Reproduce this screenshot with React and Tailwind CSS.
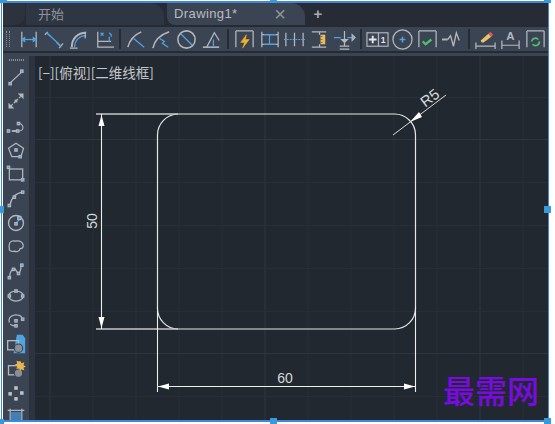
import React from 'react';

const G = '#b4b8be';
const B = '#4ea3e0';

// small square grip point used on most draw icons
const Dot = ({ x, y, s = 3, c = B }) => <rect x={x - s / 2} y={y - s / 2} width={s} height={s} fill={c} />;

const Icon = ({ children, size = 24 }) => (
    <svg width={size} height={size} viewBox="0 0 24 24" fill="none" stroke={G} strokeWidth="1.3" className="block">
        {children}
    </svg>
);

const DimBar = () => (
    <>
        <path d="M3 3h18M3 3v17M21 3v17" stroke={G} />
    </>
);

const topIcons = [
    <><path d="M5 4v16M20 4v16" /><path d="M5 12h15" stroke={B} /><path d="M5 12l3-2v4zM20 12l-3-2v4z" fill={B} stroke={B} /></>,
    <><path d="M3 7l3-3M18 21l4-5" /><path d="M6 6l13 12" stroke={B} /><path d="M5 5l4 4M15 15l4 4" stroke={B} /></>,
    <><path d="M5 20c0-9 6-15 15-15" stroke={G} strokeWidth="2" /><path d="M8 20c0-7 5-12 12-12" stroke={B} /><path d="M3 21h8M19 4v7" /></>,
    <><path d="M6 4v16h17M6 14h14" /><path d="M9 5l3 3M12 5l-3 3M18 14V9" stroke={B} /><path d="M18 5l2 2v2" stroke={B} /></>,
    <><path d="M3 20C5 12 10 7 17 4" strokeWidth="1.6" /><path d="M9 11l11 9" stroke={B} /></>,
    <><path d="M3 21C5 12 11 7 20 4" strokeWidth="1.6" /><path d="M10 11l5 3-2 2 6 4" stroke={B} /></>,
    <><circle cx="12" cy="12" r="9" strokeWidth="1.6" /><path d="M6 6l12 12" stroke={B} /></>,
    <><path d="M3 20h17" strokeWidth="1.6" /><path d="M7 20L15 5l5 8" /><path d="M14 19v-7" stroke={B} /></>,
    <><DimBar /><path d="M14 7l-6 8h4l-2 6 7-9h-4z" fill="#f0b429" stroke="#f0b429" strokeWidth=".5" /></>,
    <><path d="M4 4v16M21 4v16M4 7h17M4 17h17" stroke={G} /><path d="M6 7h13M6 17h13M12 7v10" stroke={B} /></>,
    <><path d="M3 5v14M12 5v14M21 5v14" /><path d="M1 12h22" stroke={B} strokeDasharray="2 1" /></>,
    <><path d="M4 4h15M4 20h15M12 4v3M12 17v3" /><rect x="13" y="7" width="5" height="10" fill="#edb85f" stroke="none" /><path d="M13 9h2M13 12h2M13 15h2" stroke="#555" strokeWidth=".8" /></>,
    <><path d="M12 3v16M7 19h10M7 22h10" /><path d="M1 10h7M15 10h8" stroke={B} /><path d="M12 15l-3-3h6z" fill={G} /><path d="M20 7v6l3-3z" fill={B} /></>,
    <><rect x="1" y="5" width="22" height="14" strokeWidth="1.2" /><path d="M13 5v14" /><path d="M3 12h8M7 8v8" stroke="#e6e6e6" strokeWidth="2" /><text x="15.5" y="16" fontSize="9" fill="#e6e6e6" stroke="none" fontFamily="Liberation Sans, sans-serif" fontWeight="700">1</text></>,
    <><circle cx="12" cy="12" r="10" strokeWidth="1.3" /><path d="M9 12h6M12 9v6" stroke={B} strokeWidth="1.6" /></>,
    <><DimBar /><path d="M7 14l3 3 6-5" stroke="#4fc06e" strokeWidth="2.4" /></>,
    <><path d="M1 12h6" stroke={G} strokeWidth="2" /><path d="M7 12l3-4 3 11 3-14 3 8" strokeWidth="1.4" /></>,
    <><path d="M2 15v7M22 15v7M2 19h20" /><path d="M8 15l-1-2 8-7 3 3-8 6z" fill="#e9c46a" stroke="none" /><path d="M15 6l2-2 3 3-2 2z" fill="#e05a5a" stroke="none" /></>,
    <><path d="M3 13v9M21 13v9M3 18h18" /><text x="12" y="13" textAnchor="middle" fontSize="12" fontWeight="700" fill={G} stroke="none" fontFamily="Liberation Sans, sans-serif">A</text></>,
    <><DimBar /><path d="M8 14a4 4 0 0 1 7-2M16 14a4 4 0 0 1-7 3" stroke="#4fc06e" strokeWidth="1.8" /></>,
];

const sideIcons = [
    <><path d="M5 19L19 6" /><Dot x={19} y={5} /><Dot x={5} y={20} /></>,
    <><path d="M6 18L18 6" strokeDasharray="3 1.500" /><path d="M21 3v7l-7-7zM3 21v-7l7 7z" fill={G} stroke="none" /><Dot x={12} y={12} s={2} /></>,
    <><path d="M14 18h1c5 0 6-3 5-6-1-2-3-3-4-3" /><path d="M7 18h5" stroke="#e6e6e6" strokeWidth="1.600" /><Dot x={3} y={18} /><Dot x={14} y={18} /><Dot x={15} y={9} /></>,
    <><path d="M12 4l9 6-3 10H7L3 10z" strokeWidth="1.5" /><Dot x={12} y={12} /><Dot x={17} y={20} /></>,
    <><rect x="4" y="6" width="16" height="13" strokeWidth="1.5" /><Dot x={3} y={4} /><Dot x={20} y={19} /></>,
    <><path d="M5 20C6 12 12 6 20 5" strokeWidth="1.4" /><Dot x={4} y={21} /><Dot x={10} y={11} /><Dot x={20} y={5} /></>,
    <><circle cx="12" cy="12" r="9" strokeWidth="1.6" /><path d="M12 12l5-5" stroke={B} /><Dot x={12} y={13} /><Dot x={16} y={6} s={4} /></>,
    <path d="M4 9c0-4 5-5 7-4 3-1 8 0 9 3 2 3 0 6-3 6-1 4-5 4-7 3-4 1-7-1-6-4-1-1 0-3 0-4z" strokeWidth="1.5" />,
    <><path d="M4 20c1-8 3-11 6-11 2 0 2 5 5 5 2 0 3-5 3-9" strokeWidth="1.5" /><Dot x={4} y={20} /><Dot x={9} y={10} /><Dot x={15} y={15} /><Dot x={19} y={5} /></>,
    <><ellipse cx="12" cy="12" rx="9" ry="6" strokeWidth="1.5" /><Dot x={12} y={6} /><Dot x={4} y={12} /><Dot x={20} y={12} /></>,
    <><path d="M4 15C2 8 9 5 14 6c2 0 4 1 5 3" strokeWidth="1.5" /><path d="M5 17c2 2 5 2 6 1" strokeWidth="1.5" /><Dot x={12} y={13} /><Dot x={20} y={11} /><Dot x={12} y={19} /></>,
    <><path d="M13 1h7l3 4v18H9z" fill={B} stroke="none" /><rect x="2" y="8" width="13" height="11" strokeWidth="1.6" /><circle cx="15" cy="17" r="5" fill="#8a8f96" stroke="#3b4453" /></>,
    <><rect x="3" y="8" width="12" height="11" strokeWidth="1.6" /><circle cx="15" cy="17" r="5" fill="#8a8f96" stroke="#3b4453" /><path d="M17 2l1.5 3 3.5-1-1 3.5 3 1.5-3 1.5 1 3-3.500-1L17 14l-1.500-3-3 1 1-3.500-3-1.500 3-1.500-1-3.500 3 1z" fill="#eab54d" stroke="none" /></>,
    <><Dot x={12} y={6} s={3} c="#c8ccd2" /><Dot x={5} y={13} s={3} c="#c8ccd2" /><Dot x={19} y={12} s={3} c="#c8ccd2" /><Dot x={12} y={19} s={3} c="#c8ccd2" /></>,
    <><path d="M2 4h20M5 2v22M19 2v22" strokeWidth="1.4" /><rect x="6" y="6" width="12" height="18" fill="#3f7fb5" stroke="none" /></>,
];

// free canvas: grid and the dimensioned rounded rectangle, page coordinates shifted by the canvas origin
const Drawing = () => {
    const xs = [50, 93, 136, 179, 222, 265, 308, 351, 394, 437, 480, 523];
    const ys = [97, 139, 182, 225, 268, 311, 353, 396];
    return (
        <svg width="513" height="365" viewBox="35 56 513 365" className="absolute inset-0 block">
            {xs.map(x => <line key={x} x1={x} y1="56" x2={x} y2="421" stroke={x === 50 || x === 265 || x === 480 ? '#2f3643' : '#282e39'} />)}
            {ys.map(y => <line key={y} x1="35" y1={y + 0.5} x2="548" y2={y + 0.5} stroke={y === 139 || y === 353 ? '#2f3643' : '#282e39'} />)}
            <path
                d="M178 114H394A21 21 0 0 1 415.500 135V307A21 21 0 0 1 394 329H178A21 21 0 0 1 157.500 307V135A21 21 0 0 1 178 114Z"
                stroke="#e4e6e8"
                strokeWidth="1.2"
                fill="none"
            />
            <path d="M96 114H178M96 329H178" stroke="#c4c6c9" strokeWidth="1.4" />
            <path d="M101.500 114V329M157.500 307V392M415.500 307V392M157 386.500H415" stroke="#eceded" strokeWidth="1.1" />
            <path d="M101.500 115l-3 11h6zM101.500 328l-3-11h6zM158 386.500l11-3v6zM415 386.500l-11-3v6z" fill="#fff" />
            <path d="M393 135L446 95" stroke="#d8dadc" strokeWidth="1" />
            <path d="M410 122l9-10 3 5z" fill="#fff" />
            <text x="285" y="383" textAnchor="middle" fontSize="14" fill="#d6d8da" fontFamily="Liberation Sans, sans-serif">60</text>
            <text x="0" y="0" transform="translate(97 221) rotate(-90)" textAnchor="middle" fontSize="14" fill="#d6d8da" fontFamily="Liberation Sans, sans-serif">50</text>
            <text x="0" y="0" transform="translate(433 102) rotate(-37)" textAnchor="middle" fontSize="15" fill="#d6d8da" fontFamily="Liberation Sans, sans-serif">R5</text>
        </svg>
    );
};

const Handle = ({ className }) => <div className={`absolute w-[7px] h-[7px] bg-[#3a9ad9] ${className}`} />;

const Sep = () => <div className="w-[2px] h-[20px] mx-[2.75px] bg-[#262b35]" />;

export default function App() {
    const font = { fontFamily: '"Noto Sans CJK SC", sans-serif' };
    return (
        <div className="relative w-[555px] h-[424px] bg-white overflow-hidden font-['Liberation_Sans','Noto_Sans_CJK_SC',sans-serif]">
            <div className="absolute left-[1px] top-[1px] w-[548px] h-[421px] border-t-2 border-l border-r border-b-2 border-[#3f86dc] pl-[1px]">
                <div className="flex flex-col w-full h-full bg-[#3b4453]">
                    {/* Tabs */}
                    <div className="flex h-[22px] shrink-0 bg-[#262b35] text-[13px]">
                        <div className="w-[22px] bg-[#2c323e] rounded-br-[10px]" />
                        <div className="w-[138px] ml-[1px] pl-[12px] flex items-center bg-[#2f3643] text-[#8f949b] rounded-tr-[14px]" style={font}>开始</div>
                        <div className="w-[138px] ml-[3px] pl-[7px] flex items-center justify-between bg-[#3b4453] rounded-bl-[8px] rounded-tr-[14px] text-[#b8bcc2]">
                            <span className="tracking-[0.4px]">Drawing1*</span>
                            <span className="mr-[19px] text-[20px] leading-none text-[#8f949b]">×</span>
                        </div>
                        <div className="ml-[3px] w-[20px] flex items-center justify-center text-[15px] font-bold text-[#a6aab0]">+</div>
                    </div>
                    {/* Ribbon toolbar */}
                    <div className="h-[2px] bg-[#252a33] shrink-0" />
                    <div className="flex items-center h-[24px] shrink-0 pl-[3px]">
                        <div className="w-[4px] h-[16px] mr-[5.500px] border-x border-dotted border-[#8a8f96]" />
                        {topIcons.map((ic, i) => (
                            <React.Fragment key={i}>
                                {(i === 4 || i === 8 || i === 13 || i === 17) && <Sep />}
                                <div className="w-[25.200px] flex justify-center"><Icon size={23}>{ic}</Icon></div>
                            </React.Fragment>
                        ))}
                    </div>
                    <div className="h-[2px] bg-[#252a33] shrink-0" />
                    <div className="h-[3px] shrink-0" />
                    <div className="flex flex-1 min-h-0">
                        {/* Draw toolbar */}
                        <div className="w-[27px] shrink-0 border-r border-[#2b313c] flex flex-col items-center overflow-hidden">
                            <div className="w-[15px] h-[3px] mt-[3px] mb-[6px] border-y border-dotted border-[#8a8f96]" />
                            <div className="flex flex-col gap-[4.300px]">
                                {sideIcons.map((ic, i) => <Icon key={i} size={20}>{ic}</Icon>)}
                            </div>
                        </div>
                        <div className="w-[5px] shrink-0 bg-[#2d3440]" />
                        {/* Canvas */}
                        <div className="relative flex-1 bg-[#212830] overflow-hidden">
                            <Drawing />
                            <div className="absolute left-[3px] top-[7px] text-[13.500px] leading-[18px] text-[#c4c7cb]" style={font}>[−][俯视][二维线框]</div>
                            <div className="absolute left-[408px] top-[316px] text-[32px] leading-[40px] text-[#7a0be0] font-['Liberation_Serif','Noto_Sans_CJK_SC',serif] font-medium whitespace-nowrap">最需网</div>
                        </div>
                    </div>
                </div>
            </div>
            <Handle className="left-0 top-[-4px]" />
            <Handle className="left-[270px] top-[-4px]" />
            <Handle className="left-[544px] top-[-4px]" />
            <Handle className="left-[-3px] top-[206px]" />
            <Handle className="left-[544px] top-[206px]" />
            <Handle className="left-[-3px] top-[419px]" />
            <Handle className="left-[270px] top-[418px]" />
            <Handle className="left-[544px] top-[418px]" />
        </div>
    );
}
